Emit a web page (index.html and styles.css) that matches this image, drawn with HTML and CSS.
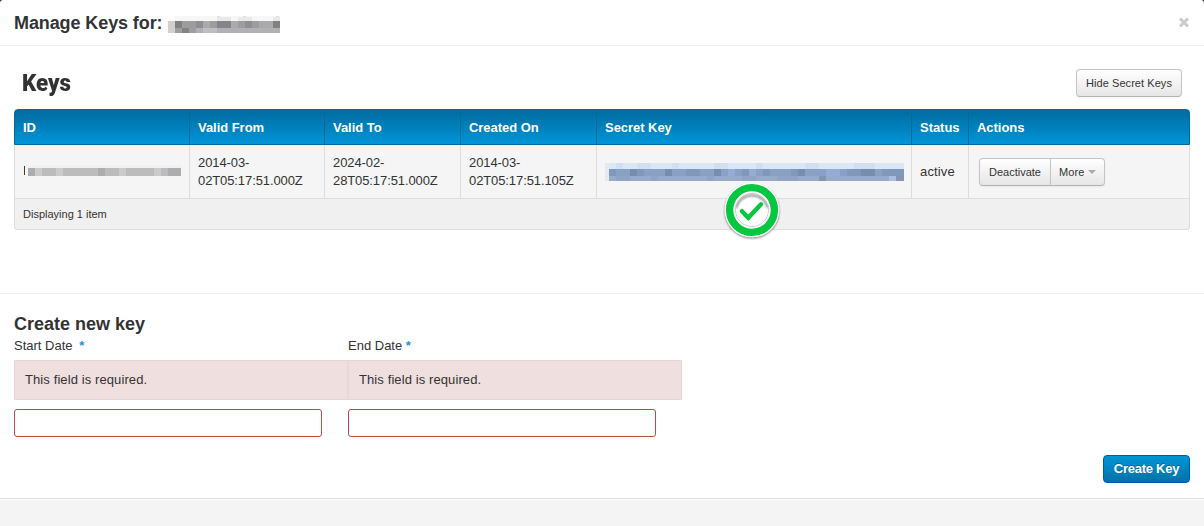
FILE: index.html
```html
<!DOCTYPE html>
<html lang="en">
<head>
<meta charset="utf-8">
<title>Manage Keys</title>
<link rel="stylesheet" href="styles.css">
</head>
<body>
<main class="modal">
  <header class="modal-header">
    <h1 class="modal-title">Manage Keys for:</h1>
    <svg class="name-mask" width="112" height="17" shape-rendering="crispEdges">
      <path fill="#f8f7f8" d="M7 0h105v5H7z"/><path fill="#e9e9eb" d="M49 1h14v4H49zM70 1h14v4H70zM105 1h7v4h-7z"/><path fill="#dedee0" d="M49 0h3v1h-3zM75 0h3v1h-3zM108 0h3v1h-3z"/>
      <path fill="#d3cfcc" d="M0 5h7v12H0z"/><path fill="#9d9c9f" d="M7 5h105v7H7z"/>
      <path fill="#81817d" d="M7 5h7v7H7zM105 5h7v7h-7z"/><path fill="#aaa9ac" d="M35 5h7v7h-7zM63 5h7v7h-7zM91 5h14v7H91z"/><path fill="#8f8e94" d="M28 5h7v7h-7zM77 5h7v7h-7z"/><path fill="#84848a" d="M49 5h14v7H49z"/>
      <path fill="#b1b1b4" d="M7 12h105v5H7z"/><path fill="#848482" d="M14 12h7v5h-7z"/><path fill="#9e9ea2" d="M7 12h7v5H7zM21 12h7v5h-7z"/><path fill="#bebec5" d="M35 12h14v5H35z"/>
    </svg>
    <button class="close" aria-label="Close"><svg width="12" height="11" viewBox="0 0 12 11"><path d="M2 1.5 10 9.5M10 1.5 2 9.5" stroke="#ccc" stroke-width="3"/></svg></button>
  </header>

  <section class="keys">
    <div class="keys-head">
      <h2 class="keys-title">Keys</h2>
      <button class="btn btn-hide">Hide Secret Keys</button>
    </div>
    <div class="table">
      <div class="row head">
        <div class="cell">ID</div><div class="cell">Valid From</div><div class="cell">Valid To</div><div class="cell">Created On</div><div class="cell">Secret Key</div><div class="cell">Status</div><div class="cell">Actions</div>
      </div>
      <div class="row data">
        <div class="cell">
          <svg class="id-mask" width="161" height="14" shape-rendering="crispEdges">
            <path fill="#572f28" d="M1 2h1v9H1z"/><path fill="#eef2f5" d="M5 1h155v3H5z"/>
            <path fill="#bcbcbd" d="M5 4h155v8H5z"/>
            <path fill="#adadaf" d="M5 4h7v8H5zM75 4h7v8h-7zM145 4h15v8h-15z"/>
            <path fill="#cbcbcc" d="M12 4h7v8h-7zM33 4h7v8h-7zM96 4h7v8h-7zM131 4h7v8h-7z"/>
          </svg>
        </div>
        <div class="cell">2014-03-<br>02T05:17:51.000Z</div>
        <div class="cell">2024-02-<br>28T05:17:51.000Z</div>
        <div class="cell">2014-03-<br>02T05:17:51.105Z</div>
        <div class="cell secret">
          <svg class="secret-mask" width="299" height="18" shape-rendering="crispEdges">
            <path fill="#e5eaf0" d="M0 0h4v18H0z"/><path fill="#d9e7f7" d="M4 0h295v6H4z"/><path fill="#d1e0f0" d="M11 0h7v6h-7zM32 0h14v6H32zM67 0h7v6h-7zM109 0h14v6h-14zM151 0h7v6h-7zM200 0h14v6h-14zM249 0h21v6h-21z"/>
            <path fill="#89a1c5" d="M4 6h295v7H4z"/>
            <path fill="#7f98bc" d="M4 6h7v7H4zM32 6h7v7h-7zM81 6h14v7H81zM137 6h7v7h-7zM158 6h7v7h-7zM186 6h7v7h-7zM242 6h14v7h-14zM277 6h22v7h-22z"/>
            <path fill="#768dae" d="M25 6h7v7h-7zM60 6h7v7h-7zM109 6h7v7h-7zM193 6h7v7h-7zM256 6h14v7h-14z"/>
            <path fill="#94acd6" d="M123 6h7v7h-7zM144 6h7v7h-7zM221 6h7v7h-7zM228 6h7v7h-7z"/>
            <path fill="#98aaca" d="M4 13h295v5H4z"/><path fill="#90a4c4" d="M11 13h14v5H11zM46 13h7v5h-7zM102 13h7v5h-7zM137 13h14v5h-14zM172 13h21v5h-21z"/><path fill="#8495b3" d="M214 13h7v5h-7zM291 13h8v5h-8z"/><path fill="#a9bde0" d="M284 13h7v5h-7z"/>
          </svg>
          <svg class="check-badge" width="60" height="62" viewBox="0 0 60 62">
            <defs><filter id="soft" x="-20%" y="-20%" width="140%" height="140%"><feGaussianBlur stdDeviation="1.1"/></filter></defs>
            <circle cx="30" cy="31.2" r="27.3" fill="#000" opacity=".5" filter="url(#soft)"/>
            <circle cx="30" cy="30" r="27.5" fill="#fff"/>
            <path d="M14.2 28a16.2 16.2 0 0 1 31.6 0" fill="none" stroke="#777" stroke-width="1.8" filter="url(#soft)"/>
            <circle cx="30" cy="30" r="16.6" fill="none" stroke="#bbb" stroke-width=".8"/>
            <circle cx="30" cy="30" r="18.2" fill="none" stroke="#fff" stroke-width="2.4"/>
            <circle cx="30" cy="30" r="22.4" fill="none" stroke="#03c73f" stroke-width="7.4"/>
            <path d="m20 31.2 6.3 6.5L39 24.3" fill="none" stroke="#03c73f" stroke-width="4.4" stroke-linecap="round"/>
          </svg>
        </div>
        <div class="cell status">active</div>
        <div class="cell"><div class="btn-group"><button class="btn">Deactivate</button><button class="btn btn-more">More<span class="caret"></span></button></div></div>
      </div>
      <div class="table-foot">Displaying 1 item</div>
    </div>
  </section>

  <section class="create">
    <h3 class="create-title">Create new key</h3>
    <div class="fields">
      <div class="field">
        <label class="label" for="start">Start Date <span class="req gap">*</span></label>
        <div class="error">This field is required.</div>
        <input class="input" id="start">
      </div>
      <div class="field">
        <label class="label" for="end">End Date <span class="req">*</span></label>
        <div class="error">This field is required.</div>
        <input class="input" id="end">
      </div>
    </div>
    <div class="actions"><button class="btn-primary">Create Key</button></div>
  </section>
  <footer class="modal-footer"></footer>
</main>
</body>
</html>
```
FILE: styles.css
```css
* { box-sizing: border-box; }
body { margin: 0; background: #222; color: #333; font: 13px/18px "Liberation Sans", Arial, sans-serif; }
h1, h2, h3 { margin: 0; }
button { font-family: inherit; }
.modal { display: flex; flex-direction: column; height: 526px; background: #fff; border-radius: 3px 3px 0 0; overflow: hidden; }
.modal-header { display: flex; align-items: flex-start; height: 46px; padding: 0 14px; border-bottom: 1px solid #eee; }
.modal-title { width: 154px; font-size: 18px; line-height: 46px; white-space: nowrap; letter-spacing: -.1px; }
.name-mask { margin-top: 16px; }
.close { margin: 17px 0 0 auto; padding: 0; border: 0; background: none; display: flex; }

.keys { height: 248px; padding: 23px 14px 0; border-bottom: 1px solid #eee; }
.keys-head { display: flex; justify-content: space-between; height: 40px; padding: 0 8px; }
.keys-title { font: 900 24px/28px Roboto, sans-serif; transform: scaleX(.93); transform-origin: left; }
.btn { height: 28px; padding: 0 9px; border: 1px solid #c4c4c4; border-bottom-color: #b3b3b3; border-radius: 4px; background: linear-gradient(#fff, #e6e6e6); box-shadow: 0 1px 2px rgba(0,0,0,.05); color: #333; font-size: 11px; line-height: 26px; white-space: nowrap; }
.btn-hide { width: 106px; padding: 0; letter-spacing: .06px; }

.table { height: 121px; border: 1px solid #ddd; border-top: 0; border-radius: 4px; background: #f0f0f0; }
.row { display: grid; grid-template-columns: 174px 135px 136px 136px 315px 57px 1fr; }
.head { height: 36px; margin: 0 -1px; border: 1px solid #006a9b; border-radius: 4px 4px 0 0; background: linear-gradient(#006b9e, #0095d9); color: #fff; font-weight: bold; line-height: 35px; letter-spacing: -.04px; }
.cell { padding: 0 8px; border-left: 1px solid #ddd; white-space: nowrap; }
.cell:first-child { border-left: 0; }
.head .cell { border-left-color: #006a9b; }
.data { height: 54px; border-bottom: 1px solid #ddd; background: #f5f5f5; letter-spacing: -.1px; }
.data .cell { display: flex; align-items: center; }
.data .status { letter-spacing: .15px; }
.id-mask { display: block; margin-top: -1px; }
.secret { position: relative; }
.secret-mask { flex: none; }
.check-badge { position: absolute; left: 125px; top: 35px; z-index: 1; }
.btn-group { display: flex; margin-left: 2px; letter-spacing: 0; }
.btn-group .btn { width: 72px; border-radius: 4px 0 0 4px; }
.btn-group .btn-more { display: flex; align-items: center; width: 55px; margin-left: -1px; padding: 0 8px; border-radius: 0 4px 4px 0; letter-spacing: .1px; }
.caret { margin-left: 4px; border: 4px solid transparent; border-top-color: #aaa; border-bottom: 0; }
.table-foot { padding: 0 8px; font-size: 11px; line-height: 31px; }

.create { height: 204px; padding: 19px 14px 0; }
.create-title { font-size: 18px; line-height: 22px; }
.fields { display: flex; }
.field { width: 334px; }
.label { display: block; height: 25px; line-height: 22px; white-space: nowrap; }
.req { color: #2c8ecb; font-weight: bold; }
.gap { margin-left: 3px; }
.error { height: 40px; padding: 0 10px; border: 1px solid #e8d5d8; background: #f0dfdf; line-height: 37px; letter-spacing: .1px; }
.field:last-child .error { border-left-color: #ecd9dc; }
.input { display: block; width: 308px; height: 28px; margin-top: 9px; border: 1px solid #b94a48; border-radius: 3px; background: #fff; }
.actions { display: flex; justify-content: flex-end; margin-top: 18px; }
.btn-primary { width: 87px; height: 28px; padding: 0; border: 1px solid #0259b3; border-radius: 4px; background: linear-gradient(#0095d6, #0072a8); color: #fff; font-size: 13px; font-weight: bold; line-height: 26px; letter-spacing: -.25px; text-shadow: 0 -1px 0 rgba(0,0,0,.25); }
.modal-footer { flex: 1; border-top: 1px solid #ddd; background: #f4f4f4; box-shadow: inset 0 1px 0 #fff; }
```
